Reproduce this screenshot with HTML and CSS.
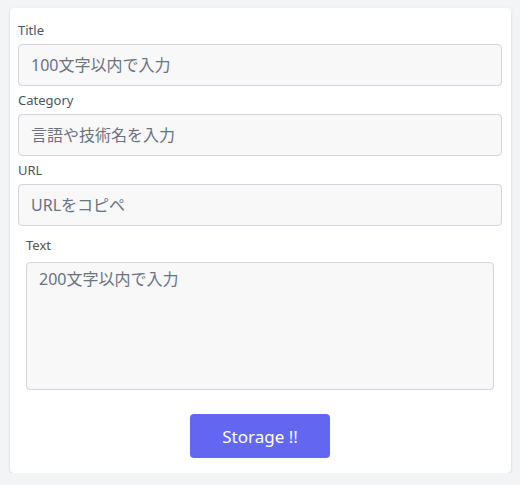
FILE: index.html
```html
<!DOCTYPE html>
<html lang="ja">
<head>
<meta charset="utf-8">
<link rel="stylesheet" href="styles.css">
</head>
<body>
<form class="card">
  <label class="label">Title</label>
  <input class="field" type="text" placeholder="100文字以内で入力">
  <label class="label">Category</label>
  <input class="field" type="text" placeholder="言語や技術名を入力">
  <label class="label">URL</label>
  <input class="field" type="text" placeholder="URLをコピペ">
  <div class="text-block">
    <label class="label label-text">Text</label>
    <textarea class="area" placeholder="200文字以内で入力"></textarea>
  </div>
  <div class="actions">
    <button class="btn" type="button">Storage !!</button>
  </div>
</form>
</body>
</html>
```
FILE: styles.css
```css
html, body {
  margin: 0;
  padding: 0;
  background: #f3f4f6;
}
body {
  padding: 8px 9px 0 10px;
  font-family: "Noto Sans", "Noto Sans CJK JP", sans-serif;
}
.card {
  display: flex;
  flex-direction: column;
  width: 501px;
  height: 465px;
  box-sizing: border-box;
  background: #ffffff;
  border-radius: 4px;
  box-shadow: 0 1px 3px rgba(0, 0, 0, 0.12), 0 1px 2px rgba(0, 0, 0, 0.06);
  padding: 8px 9px 0 8px;
}
.label {
  display: block;
  margin-top: 4px;
  margin-bottom: 4px;
  height: 20px;
  line-height: 20px;
  font-size: 13px;
  color: #4b5563;
}
.field {
  display: block;
  box-sizing: border-box;
  width: 484px;
  height: 42px;
  margin: 0;
  padding: 0 12px;
  border: 1px solid #d4d4dc;
  border-radius: 4px;
  background: #f8f8f8;
  font-family: "Noto Sans", "Noto Sans CJK JP", sans-serif;
  font-size: 16px;
  color: #374151;
  outline: none;
}
.field::placeholder, .area::placeholder {
  color: #6b7280;
  opacity: 1;
}
.text-block {
  padding: 9px 8px 8px 8px;
}
.label-text {
  margin-top: 0;
  margin-bottom: 7px;
}
.area {
  display: block;
  box-sizing: border-box;
  width: 468px;
  height: 128px;
  margin: 0;
  padding: 4px 12px;
  border: 1px solid #d4d4dc;
  border-radius: 4px;
  background: #f8f8f8;
  font-family: "Noto Sans", "Noto Sans CJK JP", sans-serif;
  font-size: 16px;
  line-height: 24px;
  resize: none;
  outline: none;
}
.actions {
  display: flex;
  justify-content: center;
  padding-top: 16px;
}
.btn {
  width: 140px;
  height: 44px;
  padding: 0;
  border: none;
  border-radius: 4px;
  background: #6366f1;
  color: #ffffff;
  font-family: "Noto Sans", sans-serif;
  font-size: 17px;
  font-weight: 400;
  cursor: pointer;
}
```
